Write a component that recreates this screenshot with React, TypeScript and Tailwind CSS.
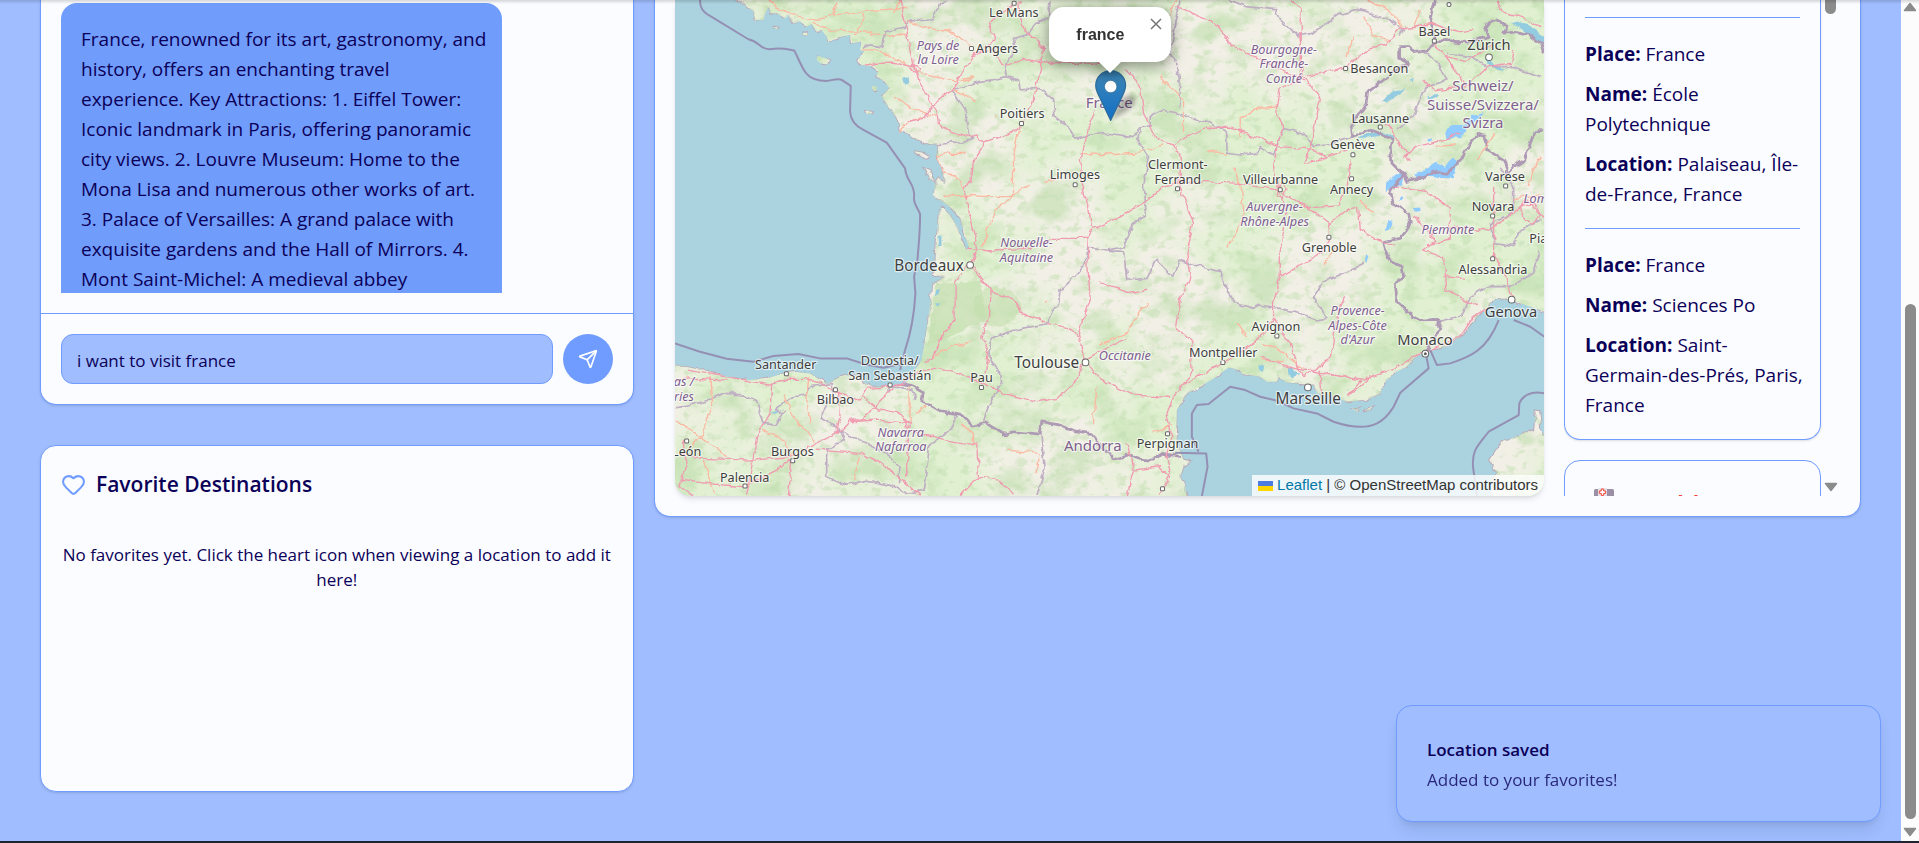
import React from "react";
import { Heart, Send } from "lucide-react";

type Label = [number, number, string];

const COAST =
  "M225 0L255 15 280 35 285 60 310 60 316 40 326 20 332 40 350 40 375 55 385 48 400 70 420 65 440 80 455 72 470 95 485 90 500 110 505 125 535 112 570 105 575 130 605 125 600 150 612 155 595 180 605 195 640 200 655 210 650 230 675 245 688 265 665 290 680 315 700 340 715 365 720 390 750 405 780 425 810 435 835 435 828 460 835 480 848 505 845 525 850 545 835 530 825 545 820 590 850 607 880 630 900 655 912 700 928 745 920 752 903 720 893 682 870 645 845 622 835 640 830 700 825 780 820 825 850 832 830 845 815 850 805 950 795 1020 785 1080 765 1110 735 1150 690 1160 640 1160 610 1145 600 1130 560 1125 540 1130 500 1150 480 1140 450 1120 400 1115 370 1120 320 1135 270 1140 200 1130 130 1110 80 1100 0 1095 0 1520 1580 1520 1580 1488 1575 1460 1560 1430 1570 1400 1592 1385 1570 1380 1565 1365 1548 1310 1550 1230 1580 1180 1620 1160 1660 1135 1705 1102 1740 1110 1745 1120 1800 1130 1820 1145 1850 1145 1856 1132 1880 1147 1920 1150 1960 1155 1970 1180 2010 1185 2060 1205 2120 1200 2160 1180 2170 1150 2200 1120 2240 1100 2260 1075 2300 1050 2360 1040 2410 1005 2430 975 2470 930 2510 895 2555 900 2610 920 2700 950 2700 -30 225 -30Z";
const ISLANDS =
  "M2625 1230L2638 1232 2645 1290 2660 1320 2700 1330 2700 1520 2500 1520 2490 1440 2510 1420 2485 1380 2505 1350 2530 1320 2570 1310 2595 1295 2620 1295ZM472 168L485 172 505 178 502 192 480 190 470 180ZM636 258L648 258 650 272 640 272ZM616 332L630 332 638 340 622 344ZM764 452L785 456 808 470 800 475 764 460ZM788 502L810 515 818 535 824 548 806 535ZM428 99L442 99 442 106 430 106ZM2070 1222L2090 1228 2100 1222 2090 1234ZM2110 1232L2138 1218 2130 1230ZM340 82L354 82 350 88Z";

const MARITIME = [
  "M120 0C120 30 135 40 150 48L265 118C300 125 300 150 330 148C365 142 380 148 403 152C415 175 425 205 440 222C455 240 475 243 500 243C520 240 535 235 545 240L572 258 570 335C572 365 590 380 610 390L680 428 735 505C738 545 765 550 762 590C758 615 780 630 780 645C780 700 775 740 772 780L762 830 766 880C762 950 752 1000 735 1050L720 1110",
  "M45 1030L120 1055 200 1076 280 1085 340 1068 415 1062 480 1075 560 1075 620 1094 670 1103 720 1093",
  "M1545 1358L1638 1360 1642 1400 1625 1488M1615 1355L1595 1310 1595 1240 1610 1215 1645 1212 1710 1160 1755 1170 1800 1190 1850 1202 1900 1225 1970 1240 2020 1265C2080 1285 2120 1285 2150 1270C2180 1255 2190 1235 2200 1220L2220 1178 2305 1105 2295 1050",
  "M2310 1050L2330 1095 2370 1090C2430 1070 2480 1050 2515 960M2560 960L2610 980 2652 1010",
  "M2652 1180C2610 1170 2585 1190 2577 1210L2575 1245 2485 1295C2450 1340 2435 1350 2438 1400L2450 1488",
];

const NATIONAL = [
  "M720 1150L760 1158 790 1175 785 1210 810 1215 840 1232 900 1242 935 1275 975 1268 1030 1302 1060 1295 1140 1302 1145 1265 1200 1275 1240 1292 1290 1300 1330 1345 1360 1380 1400 1365 1440 1378 1480 1380 1510 1360 1560 1370",
  "M2175 750L2195 785 2225 800 2230 830 2205 850 2210 900 2240 935 2280 960 2330 958 2345 985 2325 1005 2300 1050",
  "M2175 750L2170 725 2220 715 2240 690 2250 665 2245 640 2200 610 2190 580 2200 555 2230 525 2195 490 2190 440 2195 415 2130 390 2080 410 2075 370 2120 310 2125 275 2170 240 2200 215 2245 190 2215 175 2215 140 2245 140 2260 155 2300 150 2320 125 2310 70 2325 0",
  "M2230 525L2240 545 2290 530 2330 515 2360 520 2410 470 2430 430 2455 400 2470 405 2480 450 2530 480 2540 500 2535 530 2560 500 2590 480 2610 430 2620 395 2652 395",
  "M2320 125L2370 125 2420 130 2480 110 2470 80 2500 60 2540 75 2530 100 2570 95 2610 105 2640 130 2652 160",
];

const REGIONAL = [
  "M605 145L630 135 665 140 675 95 730 85 745 65 785 55 815 65 835 15 860 0",
  "M1170 0L1165 50 1130 70 1100 105 1060 115 1065 150 1040 190 1035 230 1000 240 950 245 910 260 875 268 895 300 915 330 925 405 940 415 905 430 870 425 835 435",
  "M1035 230L1075 240 1080 270 1140 265 1180 300 1185 350 1230 390 1245 415 1290 405 1340 400 1420 410 1440 385 1470 375 1470 350 1510 330 1550 340 1600 355 1640 365 1700 400 1700 460 1740 465 1790 460 1800 440 1840 465 1870 385 1930 400 1960 440 2000 435 2080 410",
  "M1440 385L1435 430 1465 470 1450 560 1455 650 1420 670 1390 740 1340 750 1280 745 1275 790 1240 830 1200 870 1195 910 1180 930 1160 975 1100 985 1050 995 990 1015 990 1085 1020 1110 1025 1150 985 1215 970 1265",
  "M1340 750L1390 755 1400 840 1460 835 1490 780 1540 830 1560 780 1620 800 1680 815 1720 910 1780 925 1800 915 1860 925 1900 935 1970 960 2000 955 1960 890 1990 845 2060 815 2110 790",
  "M1560 0L1545 80 1530 160 1560 230 1555 320M1705 0L1760 20 1850 30 1860 60 1910 105 1970 95 2030 45 2100 30 2180 55 2230 85 2220 110",
  "M45 1220L100 1212 150 1200 200 1180 250 1185 290 1205 310 1270 350 1275 370 1240 350 1225 400 1190 440 1185 450 1160 520 1150 520 1180 480 1250 530 1280 550 1320 500 1350 500 1430 560 1455 620 1440 690 1455 740 1480 790 1470 800 1400 810 1330 870 1290 890 1245",
  "M690 1180L690 1160 740 1165 770 1180 765 1200M530 1290L620 1330 680 1360 720 1400 715 1450M1145 1300L1155 1400 1130 1488M2290 150L2340 200 2360 240 2300 260 2280 300 2260 350 2210 390M2360 160L2430 170 2480 200 2560 200 2640 230M2520 500L2560 560 2560 640 2490 670 2500 730 2560 740 2580 690 2640 660M2325 970L2400 950 2430 890 2480 860 2550 860 2620 820 2640 750",
];

const MOTORWAY = [
  "M1080 0L1080 50 1100 100 1150 145 1145 190 1130 260 1115 320 1085 370 1065 395 975 428 940 480 935 530 915 565 925 640 955 750 930 800 970 850 990 870",
  "M975 428L950 405 920 412 870 395 835 370 830 340 780 250 765 210 740 90 720 0",
  "M820 315L790 355 740 365M820 315L875 268 935 170 1005 120 985 70 1060 15M765 200L700 190 650 190 610 200M935 170L1000 145 1030 195 1100 180 1145 185 1220 190 1320 190M1400 210L1440 255 1450 340 1490 420 1540 435 1560 470 1560 560 1600 670 1580 760 1590 830 1560 900 1545 980 1595 1025 1595 1110 1570 1155 1540 1190",
  "M1305 330L1285 380 1265 470 1260 540 1285 620 1295 685 1280 715 1285 830 1290 890 1255 1000 1275 1090 1340 1150 1420 1185 1530 1192",
  "M1540 435L1630 385 1710 385 1810 420 1850 440 1940 445 2000 470M1850 440L1870 380 1850 340 1860 260 1920 240 1920 30 1890 0M1915 100L1930 230 1980 295 1950 440 1930 490 1990 475 2060 450M1940 230L2060 200 2120 150 2180 130 2220 85 2320 70 2400 95 2440 90",
  "M1560 545L1640 545 1740 550 1850 570 1940 620 2035 615 2060 570 2070 480M1850 440L1840 500 1855 570 1880 640 1860 750 1860 830 1840 900 1840 960 1890 1030 1910 1090 1930 1130",
  "M955 750L885 845 885 960 850 1000 820 1070 790 1090M925 745L1000 750 1110 745 1170 715 1280 715M940 800L990 870 1060 900 1080 935 1160 970 1230 985 1255 1010M990 870L985 950 965 1010 985 1060 975 1120",
  "M705 1155L780 1115 830 1105 900 1125 960 1145 1030 1180 1130 1205 1190 1195 1250 1140 1270 1080 1340 1045 1400 1015M730 1150L690 1160 620 1165 600 1200 530 1170 440 1135 380 1135 330 1155 200 1130 80 1110",
  "M335 1150L330 1240 290 1310 270 1430 260 1488M60 1360L120 1375 280 1380 390 1370 470 1330 530 1300 570 1260 610 1260 640 1220 700 1165M395 1380L350 1410 250 1460 140 1450 60 1440M395 1380L390 1440 385 1488M470 1350L600 1360 680 1400 760 1470 785 1488M70 1320L75 1400 60 1460 100 1488",
  "M535 1170L540 1240 530 1300M570 1265L650 1260 745 1270 740 1350 740 1430M745 1270L720 1240 650 1225 610 1190M745 1290L860 1320 950 1335 955 1430 900 1488M955 1430L1020 1440 1060 1488",
  "M1540 1190L1520 1240 1535 1310 1520 1370 1530 1420 1500 1480M1570 1155L1690 1085 1780 1030 1840 960M1800 1070L1880 1100 1980 1120 2110 1137 2200 1110 2260 1070 2320 1045 2400 1010 2440 950 2480 925",
  "M1940 620L2010 670 2010 720 1970 765 1860 830M2010 670L2060 630 2095 625 2100 690 2150 720 2200 735M2260 650L2330 720 2290 750 2350 775 2360 870 2450 920M2200 560L2300 575 2370 620 2370 720 2300 735M2370 680L2480 690 2560 640 2600 600 2652 660M2500 560L2500 640 2500 770 2540 830 2555 895M2000 1120L2070 1135 2100 1140 2060 1190 2130 1130M1980 1115L1985 1190M1930 1130L1970 1110 2010 1070 2035 930 2050 895",
  "M2560 150L2550 190 2480 200 2420 260 2370 190 2320 130M2230 470L2270 440 2350 420 2400 400M2250 480L2180 370 2170 380M2420 260L2320 270 2290 240M2510 0L2530 40 2600 60 2640 80M2355 170L2420 185 2500 130",
  "M1320 680L1380 650 1460 600 1510 560 1560 545M1320 845L1420 880 1460 870M1320 680L1295 685M45 1140L110 1135 200 1140M1400 1330L1420 1410 1400 1488M1420 1410L1500 1400 1530 1430M2350 830L2410 835M1550 20L1650 60 1690 100 1710 135 1840 200 1930 240",
];

const TRUNK = [
  "M330 0L345 25 400 45 460 60 520 45 600 38 650 30 740 25M455 70L520 90 610 95 700 110 745 100M610 38L615 60 580 105M520 45L535 10M700 40L720 0M740 65L800 80 880 100 930 140M600 150L650 150 680 165 760 205M770 215L880 245 940 235M705 295L760 325 830 350M875 268L910 285 950 303M720 395L745 365 790 350",
  "M830 470L860 460 920 460M835 470L850 520 885 525 915 570M850 590L920 585 980 590 1055 590 1105 555M1075 390L1060 470 1060 590 1005 635 965 740M1150 545L1200 530M1265 460L1340 465 1420 460 1510 435M820 1070L880 1040 935 1025M1550 0L1520 60M905 235L940 230M770 1240L800 1220M1005 350L1010 350",
  "M150 1130L155 1220 130 1300 85 1350M45 1260L110 1300 200 1370M310 1290L370 1320 395 1370M370 1180L390 1240 440 1290 460 1330M450 1130L440 1200 450 1270M750 1160L750 1270M900 1270L940 1300 940 1340M1040 1350L1140 1360 1130 1420M130 1380L160 1480M600 1370L580 1440",
  "M1320 1035L1400 1000 1440 930 1465 910M1310 1155L1300 1270M1160 900L1155 905M1740 410L1740 350 1800 325 1850 322M1500 230L1570 300 1570 400M1720 500L1740 560 1750 660 1700 740M1640 450L1700 465M2110 50L2140 110 2190 120M2120 0L2180 30 2230 80M2060 170L2080 110M1730 970L1760 1010M1810 1030L1870 1060 1930 1105M1990 800L2030 740M2100 600L2140 640M2320 440L2390 435M2450 480L2500 400M2600 560L2640 470M2280 30L2260 80 2320 70M1480 1300L1540 1275M2640 580L2560 600M1800 1080L1870 1085",
];

const LAKES =
  "M2095 415Q2140 385 2205 405L2200 412Q2150 400 2105 422ZM2165 305L2200 275 2235 265 2225 280 2180 310ZM2240 245L2262 235 2255 250ZM2555 65L2600 75 2652 110 2652 135 2600 100ZM2480 165L2500 190 2530 210 2515 212 2480 190ZM730 240a7 7 0 1 0 20 0a7 7 0 1 0 -20 0M836 710h8v28h-8zM824 870l16-2-6 16h-10zM822 910h14l-6 8zM1880 1100l20 5 20 20-20 8-15-10ZM1795 1095l20 4-4 16-16-4ZM330 1236l30-8-6 10ZM2300 295L2320 280 2340 280 2310 300Z";
const GLACIERS =
  "M2350 395l30-20 30 0 20-30 40-8-20 25-30 20-20 30-40 5ZM2310 500l20-15 20 15 30-25 10 20-10 40-40 0-40-5-30 10-5-15ZM2180 550l30-30 20 0-5 30-45 20ZM2172 690l8-30 14 5-10 22ZM2262 625l14-4 2 12-12 2ZM2220 595l8-3 0 12-8-2ZM2115 765l8 10-4 20-8-12ZM2303 415l12-3-2 10-12 0Z";

const CITIES: [number, number, string, number, number, number][] = [
  [1061, 51, "Le Mans", 38, 1062, 10],
  [1011, 160, "Angers", 38, 934, 146],
  [1086, 354, "Poitiers", 38, 1084, 371],
  [1244, 538, "Limoges", 38, 1245, 554],
  [807, 812, "Bordeaux", 46, 930, 795],
  [2322, 108, "Basel", 38, 2322, 123],
  [2486, 151, "Zürich", 44, 2486, 172],
  [2157, 219, "Besançon", 38, 2056, 206],
  [2160, 369, "Lausanne", 38, 2160, 381],
  [2077, 448, "Genève", 38, 2078, 464],
  [2074, 581, "Annecy", 38, 2074, 536],
  [1861, 553, "Villeurbanne", 38, 1860, 569],
  [2534, 542, "Varese", 38, 2536, 558],
  [2498, 633, "Novara", 38, 2497, 648],
  [2007, 755, "Grenoble", 38, 2006, 712],
  [2498, 821, "Alessandria", 38, 2497, 776],
  [1847, 992, "Avignon", 38, 1850, 1008],
  [1689, 1072, "Montpellier", 38, 1688, 1087],
  [2294, 1036, "Monaco", 44, 2295, 1061],
  [2552, 951, "Genova", 44, 2554, 899],
  [1944, 1211, "Marseille", 46, 1943, 1162],
  [1522, 1344, "Perpignan", 38, 1522, 1301],
  [1160, 1104, "Toulouse", 46, 1276, 1087],
  [964, 1147, "Pau", 38, 964, 1162],
  [377, 1107, "Santander", 38, 379, 1121],
  [526, 1212, "Bilbao", 38, 526, 1169],
  [397, 1368, "Burgos", 38, 398, 1382],
  [254, 1445, "Palencia", 38, 255, 1458],
  [80, 1368, "León", 38, 80, 1323],
  [1553, 508, "Clermont-|Ferrand", 38, 1552, 566],
  [689, 1095, "Donostia/|San Sebastián", 38, 690, 1155],
];

const REGIONS: Label[] = [
  [834, 149, "Pays de|la Loire"],
  [1099, 742, "Nouvelle-|Aquitaine"],
  [1871, 161, "Bourgogne-|Franche-|Comté"],
  [1843, 633, "Auvergne-|Rhône-Alpes"],
  [2363, 702, "Piemonte"],
  [2626, 608, "Lom"],
  [2092, 945, "Provence-|Alpes-Côte|d'Azur"],
  [1394, 1080, "Occitanie"],
  [722, 1310, "Navarra|Nafarroa"],
  [72, 1158, "as /|ries"],
];

const COUNTRIES: Label[] = [
  [1347, 325, "France"],
  [2468, 273, "Schweiz/|Suisse/Svizzera/|Svizra"],
  [1298, 1353, "Andorra"],
];

function MapLabel({ x, y, text, size, pitch }: { x: number; y: number; text: string; size: number; pitch: number }) {
  return (
    <text y={y} fontSize={size}>
      {text.split("|").map((line, i) => (
        <tspan key={line} x={x} dy={i === 0 ? 0 : pitch}>
          {line}
        </tspan>
      ))}
    </text>
  );
}

function Lines({ d, stroke, width }: { d: string[]; stroke: string; width: number }) {
  return (
    <g fill="none" stroke={stroke} strokeWidth={width} strokeLinejoin="round">
      {d.map((p) => (
        <path key={p} d={p} />
      ))}
    </g>
  );
}

function MapCanvas() {
  return (
    <svg
      className="block h-full w-full font-['Noto_Sans',sans-serif]"
      viewBox="45 0 2607 1488"
      preserveAspectRatio="xMidYMid slice"
      role="img"
      aria-label="Map of France"
    >
      <defs>
        <clipPath id="land">
          <path d={COAST + ISLANDS} />
        </clipPath>
        <filter id="rough" x="0" y="0" width="100%" height="100%" colorInterpolationFilters="sRGB">
          <feTurbulence type="fractalNoise" baseFrequency="0.03" numOctaves="3" seed="4" />
          <feDisplacementMap in="SourceGraphic" scale="20" xChannelSelector="R" yChannelSelector="G" />
        </filter>
        <filter id="forest" x="0" y="0" width="100%" height="100%" colorInterpolationFilters="sRGB">
          <feTurbulence type="fractalNoise" baseFrequency="0.007 0.009" numOctaves="6" seed="11" />
          <feColorMatrix values="0 0 0 0 0.75  0 0 0 0 0.87  0 0 0 0 0.68  3 3 0 0 -2.95" />
        </filter>
        <filter id="meadow" x="0" y="0" width="100%" height="100%" colorInterpolationFilters="sRGB">
          <feTurbulence type="fractalNoise" baseFrequency="0.003" numOctaves="5" seed="23" />
          <feColorMatrix values="0 0 0 0 0.88  0 0 0 0 0.94  0 0 0 0 0.82  0 4 0 0 -1.5" />
        </filter>
        <filter id="grain" x="0" y="0" width="100%" height="100%" colorInterpolationFilters="sRGB">
          <feTurbulence type="fractalNoise" baseFrequency="0.03 0.04" numOctaves="4" seed="7" />
          <feColorMatrix values="0 0 0 0 0.76  0 0 0 0 0.87  0 0 0 0 0.69  0 0 6 0 -3.3" />
        </filter>
      </defs>
      <rect width="2700" height="1500" fill="#aad3df" />
      <g filter="url(#rough)">
        <path d={COAST + ISLANDS} fill="#f2f0e6" stroke="#b8a9b8" strokeWidth="3" />
      </g>
      <g clipPath="url(#land)">
        <rect width="2700" height="1500" filter="url(#meadow)" />
        <rect width="2700" height="1500" filter="url(#forest)" opacity="0.6" />
        <rect width="2700" height="1500" filter="url(#grain)" opacity="0.5" />
        <ellipse cx="1010" cy="920" rx="70" ry="60" fill="#c4dfae" opacity="0.6" filter="url(#rough)" />
        <path d="M825 850L960 840 975 960 870 1010 805 1030Z" fill="#c4dfae" opacity="0.7" filter="url(#rough)" />
      </g>
      <g filter="url(#rough)">
        <path d={LAKES} fill="#93cbe0" />
        <path d={GLACIERS} fill="#8fcbff" />
        <Lines d={REGIONAL} stroke="#bfaec4" width={5} />
        <Lines d={NATIONAL} stroke="#ae9ab4" width={8} />
        <Lines d={TRUNK} stroke="#fbb8a2" width={4} />
        <Lines d={MOTORWAY} stroke="#f09bb0" width={4} />
        <path
          d="M1860 550l20 15-10 30-20-5ZM2580 620l40-10 20 30-20 30-30-15ZM735 1265h18v16h-18ZM750 205l15-10 15 12-15 15Z"
          fill="none"
          stroke="#f09bb0"
          strokeWidth="4"
        />
      </g>
      <Lines d={MARITIME} stroke="#9590b3" width={6} />
      <g fill="#fff" stroke="#666" strokeWidth="3">
        {CITIES.map(([, , name, size, x, y]) =>
          size > 40 ? (
            <circle key={name} cx={x} cy={y} r="10" />
          ) : (
            <rect key={name} x={x - 6} y={y - 6} width="12" height="12" rx="3" />
          ),
        )}
        <rect x="1501" y="1460" width="12" height="12" rx="3" />
        <circle cx="2366" cy="14" r="6" />
        <circle cx="2295" cy="1061" r="3" fill="#444" />
      </g>
      <g textAnchor="middle" stroke="#fff" strokeOpacity="0.65" strokeWidth="7" strokeLinejoin="round" paintOrder="stroke">
        <g fill="#7f5f92" fontStyle="italic">
          {REGIONS.map(([x, y, t]) => (
            <MapLabel key={t} x={x} y={y} text={t} size={38} pitch={44} />
          ))}
        </g>
        <g fill="#80608c">
          {COUNTRIES.map(([x, y, t]) => (
            <MapLabel key={t} x={x} y={y} text={t} size={45} pitch={56} />
          ))}
        </g>
        <g fill="#3f3f3f">
          {CITIES.map(([x, y, t, s]) => (
            <MapLabel key={t} x={x} y={y} text={t} size={s} pitch={45} />
          ))}
          <MapLabel x={2634} y={728} text="Pia" size={38} pitch={45} />
        </g>
      </g>
    </svg>
  );
}

function MapPin() {
  return (
    <svg className="block h-[51px] w-[50px]" viewBox="0 0 40 41" aria-hidden="true">
      <defs>
        <linearGradient id="pin" x1="0" y1="0" x2="0" y2="1">
          <stop offset="0" stopColor="#2e6c97" />
          <stop offset="0.15" stopColor="#3883b7" />
          <stop offset="1" stopColor="#126fc6" />
        </linearGradient>
        <filter id="soft">
          <feGaussianBlur stdDeviation="1.6" />
        </filter>
      </defs>
      <path d="M13 40L20 25Q28 17 32 22Q34 28 24 34Z" fill="#000" opacity="0.28" filter="url(#soft)" />
      <path
        d="M12.5.5C5.9.5.5 5.9.5 12.3c0 2.9 1.1 5.6 2.5 8.4L12.5 40.5 22 20.7c1.4-2.8 2.5-5.5 2.5-8.4C24.5 5.900 19.100.5 12.5.5z"
        fill="url(#pin)"
        stroke="#2e6c97"
      />
      <circle cx="12.5" cy="13.3" r="5" fill="#fff" stroke="#2e6c97" strokeWidth="0.6" />
    </svg>
  );
}

function Field({ label, children }: { label: string; children: React.ReactNode }) {
  return (
    <p className="-mr-2">
      <b className="font-bold">{label}:</b> {children}
    </p>
  );
}

function Arrow({ up, className }: { up?: boolean; className: string }) {
  return (
    <svg className={className} viewBox="0 0 14 10" aria-hidden="true">
      <path
        d={up ? "M7 1.5L12.5 8.5H1.5Z" : "M7 8.5L12.5 1.5H1.5Z"}
        fill="#8b8b8b"
        stroke="#8b8b8b"
        strokeWidth="1.5"
        strokeLinejoin="round"
      />
    </svg>
  );
}

export default function App() {
  return (
    <div className="relative flex h-screen flex-col overflow-hidden bg-[#9fbdff] font-['Open_Sans','Noto_Sans',sans-serif] text-[#0b0058]">
      <div className="flex min-h-0 flex-1">
        <main className="grid min-w-0 flex-1 grid-cols-3 items-start gap-5 px-10">
          <div className="flex flex-col gap-10">
            <section className="rounded-b-2xl border border-t-0 border-[#709cff] bg-[#fbfcff] shadow-sm">
              <div className="px-5 pt-[3px] pb-5">
                <div className="h-[290px] w-4/5 overflow-hidden rounded-t-2xl bg-[#709cfc] pt-[21px] pr-3 pl-5 text-[19px] leading-[30px]">
                  France, renowned for its art, gastronomy, and history, offers an enchanting travel experience. Key
                  Attractions: 1. Eiffel Tower: Iconic landmark in Paris, offering panoramic city views. 2. Louvre
                  Museum: Home to the Mona Lisa and numerous other works of art. 3. Palace of Versailles: A grand palace
                  with exquisite gardens and the Hall of Mirrors. 4. Mont Saint-Michel: A medieval abbey
                </div>
              </div>
              <form className="flex gap-[10px] border-t border-[#709cff] p-5" onSubmit={(e) => e.preventDefault()}>
                <input
                  aria-label="Message"
                  defaultValue="i want to visit france"
                  className="h-[50px] min-w-0 flex-1 rounded-xl border border-[#709cff] bg-[#9fbdff] px-[15px] pt-0.5 text-[17px] outline-none"
                />
                <button
                  type="submit"
                  aria-label="Send"
                  className="flex size-[50px] items-center justify-center rounded-full bg-[#709cff] text-white"
                >
                  <Send size={20} />
                </button>
              </form>
            </section>

            <section className="h-[347px] rounded-2xl border border-[#709cff] bg-[#fbfcff] px-5 pt-[21px] shadow-sm">
              <h2 className="flex items-center gap-[10px] text-[21px] leading-[35px] font-semibold">
                <Heart size={25} className="text-[#709cff]" />
                Favorite Destinations
              </h2>
              <p className="pt-10 text-center text-[17px] leading-[25px]">
                No favorites yet. Click the heart icon when viewing a location to add it here!
              </p>
            </section>
          </div>

          <section className="col-span-2 flex gap-5 rounded-b-2xl border border-t-0 border-[#709cff] bg-[#fbfcff] px-5 pb-5 shadow-sm">
            <div className="relative h-[496px] min-w-0 flex-1 overflow-hidden rounded-b-2xl shadow-md">
              <MapCanvas />
              <div className="absolute top-[70px] left-1/2 -ml-[14px]">
                <MapPin />
              </div>
              <div className="absolute top-[7px] left-1/2 -ml-[60px] h-[55px] w-[122px] drop-shadow-[0_3px_8px_rgba(0,0,0,0.45)]">
                <div className="relative h-full rounded-[15px] bg-white px-[27px] font-['Liberation_Sans',sans-serif] text-[16px] leading-[55px] font-bold text-[#333]">
                  france
                  <button type="button" aria-label="Close popup" className="absolute top-2.5 right-2 p-px">
                    <svg viewBox="0 0 12 12" className="size-3" aria-hidden="true">
                      <path d="M1 1L11 11M11 1L1 11" stroke="#757575" strokeWidth="1.5" />
                    </svg>
                  </button>
                </div>
                <svg viewBox="0 0 24 12" className="mx-auto -mt-px block h-3 w-6" aria-hidden="true">
                  <path d="M0 0H24L12 12Z" fill="#fff" />
                </svg>
              </div>
              <div className="absolute right-0 bottom-0 flex h-[21px] items-center gap-1 bg-white/80 px-[6px] font-['Liberation_Sans',sans-serif] text-[15px] text-[#333]">
                <svg viewBox="0 0 15 10" className="h-2.5 w-[15px]" aria-hidden="true">
                  <path fill="#4c7be1" d="M0 0h15v5H0z" />
                  <path fill="#ffd500" d="M0 5h15v5H0z" />
                </svg>
                <span>
                  <a href="#leaflet" className="text-[#0078a8]">Leaflet</a> | © OpenStreetMap contributors
                </span>
              </div>
            </div>

            <aside className="flex h-[496px] w-[276px] gap-[3px] overflow-hidden">
              <div className="flex min-w-0 flex-1 flex-col gap-5 text-[19px] leading-[30px]">
                <article className="shrink-0 rounded-b-2xl border border-t-0 border-[#709cff] px-5 pt-[17px] pb-[19px] shadow-sm">
                  <div className="flex flex-col gap-[10px] border-t border-[#709cff] pt-[21px] pb-[19px]">
                    <Field label="Place">France</Field>
                    <Field label="Name">École Polytechnique</Field>
                    <Field label="Location">Palaiseau, Île-de-France, France</Field>
                  </div>
                  <div className="flex flex-col gap-[10px] border-t border-[#709cff] pt-[21px]">
                    <Field label="Place">France</Field>
                    <Field label="Name">Sciences Po</Field>
                    <Field label="Location">Saint-Germain-des-Prés, Paris, France</Field>
                  </div>
                </article>
                <article className="shrink-0 rounded-2xl border border-[#709cff] px-[27px] pt-5">
                  <h3 className="flex items-start gap-5 text-[21px] leading-[44px] font-bold text-[#f44336]">
                    <svg viewBox="0 0 24 24" className="mt-0.5 size-6" aria-hidden="true">
                      <rect x="2" y="6" width="20" height="18" rx="1.5" fill="#9b8fa5" />
                      <rect x="6" y="5" width="9" height="19" fill="#e6e4ea" />
                      <path d="M9.3 6h2.4v2h2v2.4h-2v2H9.3v-2h-2V8h2z" fill="#fff" stroke="#f44336" />
                    </svg>
                    Healthcare
                  </h3>
                </article>
              </div>
              <div className="flex w-4 flex-col justify-between pb-1" aria-hidden="true">
                <div className="ml-px h-[14px] w-[11px] rounded-b-full bg-[#8b8b8b]" />
                <Arrow className="h-[10px] w-[14px]" />
              </div>
            </aside>
          </section>
        </main>

        <div className="flex w-[18px] flex-col items-center bg-[#fcfcfc] pt-[2px] pb-1" aria-hidden="true">
          <Arrow up className="h-[10px] w-[14px]" />
          <div className="mt-[292px] mb-2 w-[11px] flex-1 rounded-full bg-[#8b8b8b]" />
          <Arrow className="h-[10px] w-[14px]" />
        </div>
      </div>
      <div className="h-[2px] bg-[#1f2430]" />
      <div className="absolute inset-x-0 top-0 h-1 bg-linear-to-b from-black/15 to-transparent" />

      <div
        role="status"
        className="absolute right-[38px] bottom-[21px] flex h-[117px] w-[485px] flex-col justify-center rounded-2xl border border-[#709cff] bg-[#9fbdff] px-[30px] pt-0.5 text-[17px] leading-[30px] shadow-lg"
      >
        <p className="font-semibold">Location saved</p>
        <p className="opacity-80">Added to your favorites!</p>
      </div>
    </div>
  );
}
